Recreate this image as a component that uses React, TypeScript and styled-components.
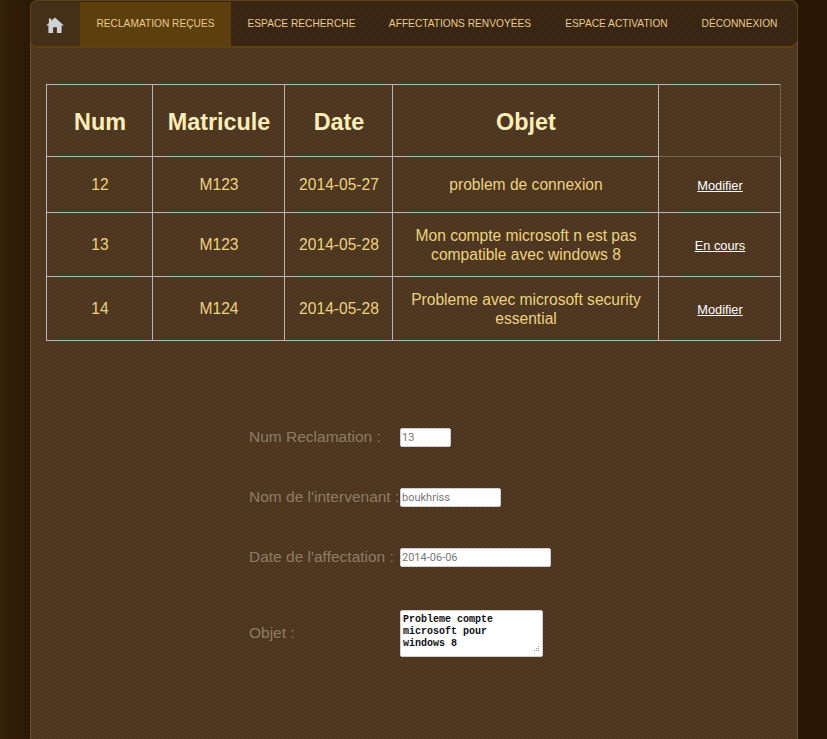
import React from 'react';
import styled, { createGlobalStyle } from 'styled-components';

const tile = (base: string, dark: string) =>
  `url("data:image/svg+xml,%3Csvg xmlns='http://www.w3.org/2000/svg' width='4' height='4'%3E%3Crect width='4' height='4' fill='%23${base}'/%3E%3Cpath d='M0 0h1v1H0zM1 1h1v1H1zM2 2h1v1H2zM3 3h1v1H3zM3 0h1v1H3zM2 1h1v1H2zM1 2h1v1H1zM0 3h1v1H0z' fill='%23${dark}'/%3E%3C/svg%3E")`;

const grip = `url("data:image/svg+xml,%3Csvg xmlns='http://www.w3.org/2000/svg' width='15' height='15'%3E%3Cpath d='M11 5h1v1h-1zM9 7h1v1H9zM11 7h1v1h-1zM7 9h1v1H7zM9 9h1v1H9zM11 9h1v1h-1z' fill='%23999'/%3E%3C/svg%3E")`;

const Global = createGlobalStyle`
  html, body { margin: 0; padding: 0; height: 739px; overflow: hidden; background: #281704; }
  body { font-family: "Liberation Sans", Arial, sans-serif; }
`;
const Page = styled.div`
  width: 827px;
  height: 739px;
  overflow: hidden;
  background: linear-gradient(90deg, #362108 0, #2a1905 30px, #281704 100%);
`;
const Shell = styled.div`
  width: 768px;
  margin-left: 30px;
  height: 739px;
  box-sizing: border-box;
  border-left: 1px solid #6b5030;
  border-right: 1px solid #6b5030;
  background-color: #4f3720;
  background-image: ${tile('543b23', '4a331e')};
  border-radius: 8px 8px 0 0;
`;
const Nav = styled.nav`
  display: flex;
  height: 48px;
  box-sizing: border-box;
  margin: 0 -1px;
  padding-top: 1px;
  border: 1px solid #5d4318;
  border-bottom: 2px solid #5f420f;
  border-radius: 8px;
  background-color: #392512;
  background-image: ${tile('3c2814', '362310')};
  overflow: hidden;
`;
const NavItem = styled.a<{ $w: number; $active?: boolean }>`
  display: flex;
  flex: none;
  align-items: center;
  justify-content: center;
  width: ${p => p.$w}px;
  height: 45px;
  padding-bottom: 3px;
  box-sizing: border-box;
  font-size: 10.2px;
  color: #e8c98e;
  white-space: nowrap;
  background: ${p => (p.$active ? '#5c3f0d' : 'transparent')};
`;
const HomeItem = styled(NavItem)`
  padding: 0 1px 0 0;
  background: #443019;
`;
const Content = styled.main`
  padding: 36px 16px 0 15px;
`;
const Table = styled.table`
  width: 735px;
  border-collapse: collapse;
  table-layout: fixed;
  color: #ecd27f;
  font-size: 15.6px;
  text-align: center;
  border: 1px solid #b4b6b8;
`;
const Cell = styled.td`
  border: 1px solid #b4b6b8;
  padding: 1px 2px 0 3px;
  line-height: 19.5px;
`;
const Head = styled.th`
  border: 1px solid #b4b6b8;
  height: 72px;
  padding: 4px 0 0 1px;
  box-sizing: border-box;
  font-size: 23.4px;
  color: #fdeeb8;
`;
const EmptyHead = styled(Head)`
  border-color: #b4b6b8 #75644f #75644f #b4b6b8;
`;
const LinkText = styled.a`
  color: #fff;
  font-size: 12.8px;
  text-decoration: underline;
`;
const Row = styled.tr<{ $h: number }>`
  height: ${p => p.$h}px;
`;
const Form = styled.form`
  display: flex;
  flex-direction: column;
  margin: 66px 0 0 203px;
`;
const Field = styled.div<{ $h: number }>`
  display: flex;
  align-items: center;
  height: ${p => p.$h}px;
`;
const Label = styled.label`
  width: 151px;
  flex: none;
  font-size: 15.5px;
  color: #8e7d65;
  white-space: nowrap;
`;
const Input = styled.input<{ $w: number }>`
  width: ${p => p.$w}px;
  height: 19px;
  box-sizing: border-box;
  padding: 0 1px;
  border: 1px solid #cfcfcf;
  border-radius: 2px;
  background: #fff;
  font: 11px "Roboto", "Liberation Sans", sans-serif;
  color: #777;
`;
const Area = styled.textarea`
  width: 143px;
  height: 47px;
  box-sizing: border-box;
  padding: 3px 12px 3px 2px;
  border: 1px solid #cfcfcf;
  border-radius: 2px;
  background: #fff;
  font: bold 10px/12px "Liberation Mono", monospace;
  color: #111;
  &::-webkit-resizer {
    background: ${grip};
  }
`;

const Home = () => (
  <svg width="18" height="16" viewBox="0 0 19 17">
    <path d="M9.5 0.5 L19 9 H16.5 V17 H11.5 V11 H7.5 V17 H2.5 V9 H0 L3 6.3 V1.5 H5.5 V4 Z" fill="#ccd2d6" />
  </svg>
);

const rows = [
  { h: 56, n: '12', m: 'M123', d: '2014-05-27', o: 'problem de connexion', a: 'Modifier' },
  { h: 64, n: '13', m: 'M123', d: '2014-05-28', o: 'Mon compte microsoft n est pas compatible avec windows 8', a: 'En cours' },
  { h: 64, n: '14', m: 'M124', d: '2014-05-28', o: 'Probleme avec microsoft security essential', a: 'Modifier' },
];

export default function App() {
  return (
    <Page>
      <Global />
      <Shell>
        <Nav>
          <HomeItem $w={49}><Home /></HomeItem>
          <NavItem $w={151} $active>RECLAMATION REÇUES</NavItem>
          <NavItem $w={141}>ESPACE RECHERCHE</NavItem>
          <NavItem $w={176}>AFFECTATIONS RENVOYÉES</NavItem>
          <NavItem $w={137}>ESPACE ACTIVATION</NavItem>
          <NavItem $w={109}>DÉCONNEXION</NavItem>
        </Nav>
        <Content>
          <Table>
            <colgroup>
              <col width="106" /><col width="132" /><col width="108" /><col width="266" /><col width="122" />
            </colgroup>
            <thead>
              <tr>
                <Head>Num</Head><Head>Matricule</Head><Head>Date</Head><Head>Objet</Head><EmptyHead />
              </tr>
            </thead>
            <tbody>
              {rows.map(r => (
                <Row key={r.n} $h={r.h}>
                  <Cell>{r.n}</Cell>
                  <Cell>{r.m}</Cell>
                  <Cell>{r.d}</Cell>
                  <Cell>{r.o}</Cell>
                  <Cell><LinkText href="#">{r.a}</LinkText></Cell>
                </Row>
              ))}
            </tbody>
          </Table>
          <Form>
            <Field $h={60}><Label>Num Reclamation :</Label><Input $w={51} defaultValue="13" /></Field>
            <Field $h={60}><Label>Nom de l'intervenant :</Label><Input $w={101} defaultValue="boukhriss" /></Field>
            <Field $h={60}><Label>Date de l'affectation :</Label><Input $w={151} defaultValue="2014-06-06" /></Field>
            <Field $h={92}><Label>Objet :</Label><Area spellCheck={false} defaultValue={"Probleme compte microsoft pour windows 8"} /></Field>
          </Form>
        </Content>
      </Shell>
    </Page>
  );
}
